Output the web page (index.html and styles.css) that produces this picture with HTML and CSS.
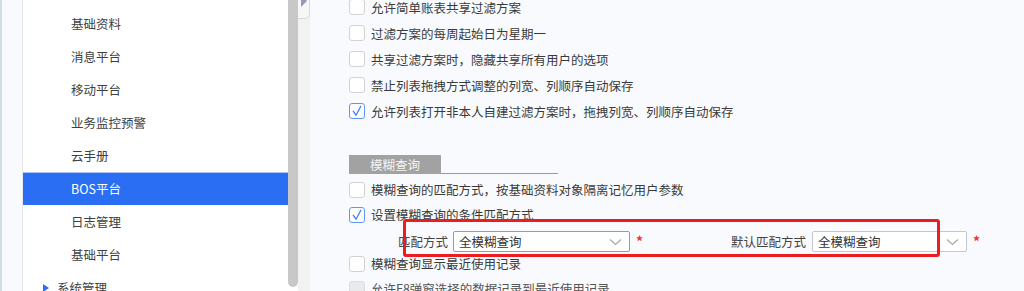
FILE: index.html
```html
<!DOCTYPE html>
<html lang="zh">
<head>
<meta charset="utf-8">
<link rel="stylesheet" href="styles.css">
</head>
<body>
<div class="page">
  <div class="edge"></div>
  <div class="pad"></div>
  <nav class="menu">
    <div class="item">基础资料</div>
    <div class="item">消息平台</div>
    <div class="item">移动平台</div>
    <div class="item">业务监控预警</div>
    <div class="item">云手册</div>
    <div class="item active">BOS平台</div>
    <div class="item">日志管理</div>
    <div class="item">基础平台</div>
    <div class="item group"><span class="tri"></span>系统管理</div>
  </nav>
  <div class="scrollbar"><div class="thumb"></div></div>
  <div class="gutter"><div class="tab"><span class="tab-tri"></span></div></div>
  <main class="content">
    <div class="opts top">
      <div class="row"><span class="cb"></span>允许简单账表共享过滤方案</div>
      <div class="row"><span class="cb"></span>过滤方案的每周起始日为星期一</div>
      <div class="row"><span class="cb"></span>共享过滤方案时，隐藏共享所有用户的选项</div>
      <div class="row"><span class="cb"></span>禁止列表拖拽方式调整的列宽、列顺序自动保存</div>
      <div class="row"><span class="cb checked"><svg viewBox="0 0 16 16" width="16" height="16"><path d="M4.2 8.2 L7 12.2 L11.8 3.2" fill="none" stroke="#3f82f0" stroke-width="1.3" stroke-linecap="round" stroke-linejoin="round"/></svg></span>允许列表打开非本人自建过滤方案时，拖拽列宽、列顺序自动保存</div>
    </div>
    <div class="section"><span class="section-title">模糊查询</span></div>
    <div class="opts bottom">
      <div class="row"><span class="cb"></span>模糊查询的匹配方式，按基础资料对象隔离记忆用户参数</div>
      <div class="row"><span class="cb checked"><svg viewBox="0 0 16 16" width="16" height="16"><path d="M4.2 8.2 L7 12.2 L11.8 3.2" fill="none" stroke="#3f82f0" stroke-width="1.3" stroke-linecap="round" stroke-linejoin="round"/></svg></span>设置模糊查询的条件匹配方式</div>
      <div class="form-row">
        <div class="field f1">
          <label class="lbl">匹配方式</label>
          <div class="select focus"><span>全模糊查询</span><svg class="chev" viewBox="0 0 13 8" width="13" height="8"><polyline points="1,1.5 6.5,6.5 12,1.5" fill="none" stroke="#a8a8a8" stroke-width="1.2"/></svg></div>
          <span class="req">*</span>
        </div>
        <div class="field f2">
          <label class="lbl">默认匹配方式</label>
          <div class="select"><span>全模糊查询</span><svg class="chev" viewBox="0 0 13 8" width="13" height="8"><polyline points="1,1.5 6.5,6.5 12,1.5" fill="none" stroke="#a8a8a8" stroke-width="1.2"/></svg></div>
          <span class="req">*</span>
        </div>
      </div>
      <div class="row"><span class="cb"></span>模糊查询显示最近使用记录</div>
      <div class="row disabled"><span class="cb"></span>允许F8弹窗选择的数据记录到最近使用记录</div>
    </div>
    <div class="annot"></div>
  </main>
</div>
</body>
</html>
```

FILE: styles.css
```css
* { box-sizing: border-box; }
html, body { margin: 0; padding: 0; }
body {
  width: 1024px;
  height: 291px;
  overflow: hidden;
  font-family: "Noto Sans CJK SC", "Noto Sans", sans-serif;
  font-size: 12.5px;
  color: #3a3a3a;
}
.page { display: flex; height: 291px; }
.edge { width: 2px; background: #cbdfe5; }
.pad { width: 21px; background: #f8fafd; border-right: 1px solid #e6e8ec; }
.menu { width: 265px; background: #fff; padding-top: 7px; }
.item {
  height: 33px;
  line-height: 33px;
  padding-left: 48px;
  color: #404040;
  white-space: nowrap;
}
.item.active {
  background: #2a6ff3;
  color: #fff;
  border-top: 1px solid #a9c5f7;
  line-height: 31px;
}
.item.group { padding-left: 20px; display: flex; align-items: center; }
.tri {
  width: 0; height: 0;
  border-left: 6px solid #2a6ff3;
  border-top: 4.5px solid transparent;
  border-bottom: 4.5px solid transparent;
  margin-right: 8px;
}
.scrollbar { width: 10px; background: #fff; }
.thumb { height: 287px; background: #c8c8c8; border-radius: 0 0 5px 5px; }
.gutter { width: 12px; background: #f2f2f2; }
.tab {
  height: 19px;
  background: #f7f7f7;
  border-right: 1px solid #d9d9d9;
  border-bottom: 1px solid #d9d9d9;
  border-radius: 0 0 5px 0;
  position: relative;
}
.tab-tri {
  position: absolute;
  left: 3px; top: -5px;
  width: 0; height: 0;
  border-left: 6px solid #8f9bb8;
  border-top: 6px solid transparent;
  border-bottom: 6px solid transparent;
}
.content {
  flex: 1;
  background: #f9fafd;
  padding-left: 39px;
  position: relative;
}
.opts.top { margin-top: -6px; }
.row {
  display: flex;
  align-items: center;
  white-space: nowrap;
}
.top .row { height: 26px; }
.bottom .row { height: 25px; }
.cb {
  width: 16px; height: 16px;
  border: 1px solid #d2d2d2;
  border-radius: 3px;
  background: #fff;
  margin-right: 6px;
  flex: none;
  display: flex;
}
.cb svg { margin: -1px; }
.cb.checked { border-color: #5f97f2; }
.row.disabled { color: #555; }
.row.disabled .cb { background: #e9eaec; border-color: #dcdcdc; }
.section {
  margin-top: 31px;
  width: 209px;
  height: 19px;
  border-bottom: 1px solid #9a9a9a;
  margin-bottom: 3px;
}
.section-title {
  display: inline-block;
  width: 92px;
  height: 19px;
  line-height: 19px;
  padding-left: 21px;
  background: #a2a2a2;
  color: #f4f4f4;
}
.form-row {
  display: flex;
  height: 25px;
  padding-top: 4px;
  margin-bottom: -1px;
}
.field { display: flex; align-items: flex-start; }
.f1 { width: 358px; }
.lbl {
  width: 99px;
  text-align: right;
  line-height: 21px;
  color: #444;
  margin-right: 5px;
}
.f2 .lbl { margin-right: 6px; }
.select {
  height: 21px;
  border: 1px solid #c3c7cf;
  background: #fff;
  border-radius: 2px;
  display: flex;
  align-items: center;
  justify-content: space-between;
  padding: 0 5px 0 5px;
  color: #333;
}
.f1 .select { width: 177px; border-color: #6ea2f2; }
.f2 .select { width: 155px; }
.chev { margin-right: 2px; }
.req {
  color: #f5312f;
  margin-left: 6px;
  font-size: 14px;
  line-height: 20px;
  font-weight: bold;
}
.annot {
  position: absolute;
  left: 93px;
  top: 219px;
  width: 537px;
  height: 38px;
  border: 3px solid #ec1d22;
  border-radius: 3px;
  pointer-events: none;
}
```
